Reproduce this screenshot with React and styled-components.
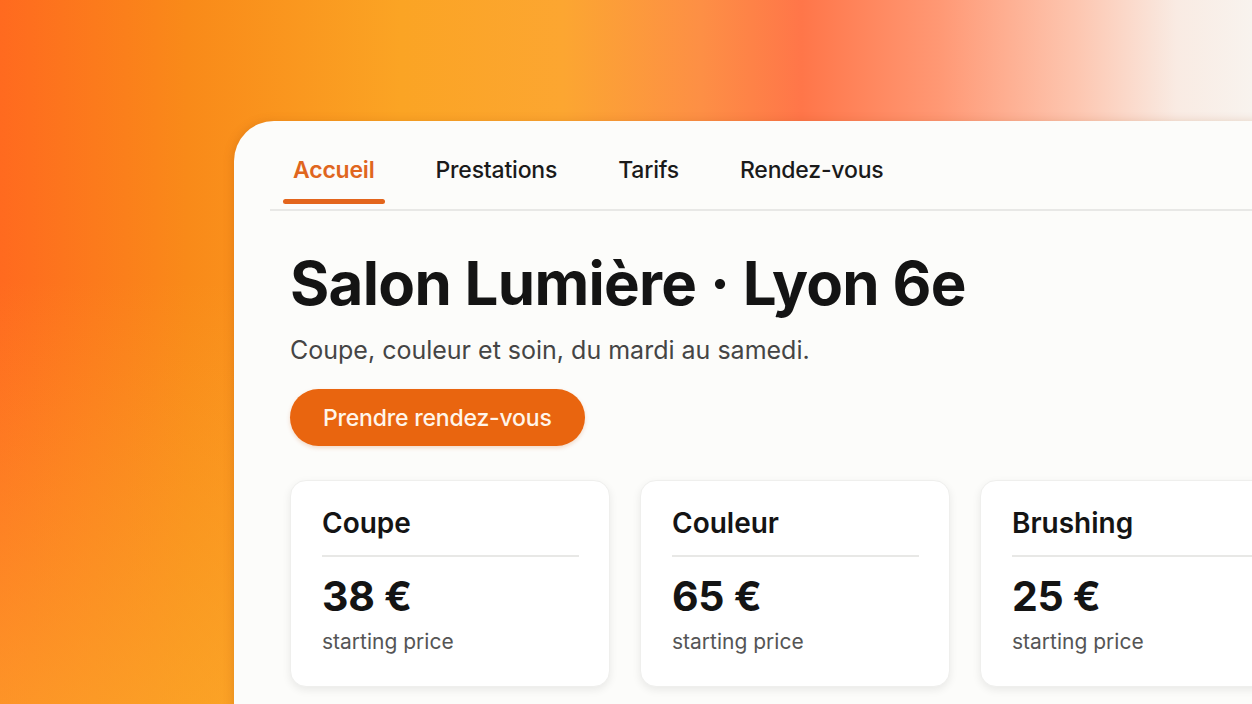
import React from "react";
import styled, { createGlobalStyle } from "styled-components";

const GlobalStyle = createGlobalStyle`
  html, body {
    margin: 0;
    padding: 0;
    height: 100%;
    overflow: hidden;
  }
  body {
    font-family: "Inter", "Noto Sans", sans-serif;
  }
`;

const tabs = ["Accueil", "Prestations", "Tarifs", "Rendez-vous"];

const services = [
  { name: "Coupe", price: "38 €" },
  { name: "Couleur", price: "65 €" },
  { name: "Brushing", price: "25 €" },
];

export default function App() {
  return (
    <Page>
      <GlobalStyle />
      <Panel>
        <Nav>
          {tabs.map((t, i) => (
            <Tab key={t} active={i === 0}>
              {t}
            </Tab>
          ))}
        </Nav>
        <Content>
          <Title>Salon Lumière · Lyon 6e</Title>
          <Subtitle>Coupe, couleur et soin, du mardi au samedi.</Subtitle>
          <Button>Prendre rendez-vous</Button>
          <Cards>
            {services.map((s) => (
              <Card key={s.name}>
                <CardTitle>{s.name}</CardTitle>
                <Price>{s.price}</Price>
                <PriceNote>starting price</PriceNote>
              </Card>
            ))}
          </Cards>
        </Content>
      </Panel>
    </Page>
  );
}

const Page = styled.div`
  width: 1252px;
  height: 704px;
  overflow: hidden;
  box-sizing: border-box;
  padding: 121px 0 0 234px;
  background:
    linear-gradient(180deg, rgba(255, 106, 30, 0) 40%, rgba(252, 175, 45, 0.6) 100%),
    linear-gradient(
      90deg,
      #ff6a1f 0%,
      #f98a19 15%,
      #fba424 32%,
      #fca631 45%,
      #fd8f45 56%,
      #ff7649 64%,
      #ff9874 75%,
      #fdc6b0 86%,
      #f9ebe3 94%,
      #f8f3ee 100%
    );
`;

const Panel = styled.div`
  width: 1060px;
  height: 640px;
  background: #fcfcfa;
  border-radius: 40px 0 0 0;
  box-shadow: -2px 0 10px rgba(150, 60, 0, 0.18);
`;

const Nav = styled.nav`
  display: flex;
  gap: 41px;
  margin-left: 36px;
  padding: 32px 0 0 13px;
  border-bottom: 2px solid #e8e8e6;
`;

const Tab = styled.div`
  position: relative;
  padding: 0 10px 22px;
  font-size: 23px;
  line-height: 34px;
  letter-spacing: -0.2px;
  color: ${(p) => (p.active ? "#e0661e" : "#1a1a1a")};
  font-weight: ${(p) => (p.active ? 600 : 500)};

  &::after {
    content: "";
    display: ${(p) => (p.active ? "block" : "none")};
    position: absolute;
    left: 0;
    right: 0;
    bottom: 5px;
    height: 5px;
    border-radius: 3px;
    background: #e3651c;
  }
`;

const Content = styled.div`
  padding: 34px 0 0 56px;
`;

const Title = styled.h1`
  margin: 0;
  font-size: 60px;
  line-height: 76px;
  font-weight: 700;
  letter-spacing: -0.7px;
  color: #141414;
`;

const Subtitle = styled.p`
  margin: 12px 0 0;
  font-size: 25px;
  line-height: 34px;
  color: #454545;
`;

const Button = styled.button`
  display: block;
  margin-top: 22px;
  height: 57px;
  padding: 0 33px;
  border: none;
  border-radius: 29px;
  background: #e9650f;
  color: #fff5ea;
  font-family: inherit;
  font-size: 23px;
  font-weight: 500;
  letter-spacing: -0.2px;
  box-shadow: 0 2px 4px rgba(200, 80, 0, 0.2);
`;

const Cards = styled.div`
  display: grid;
  grid-template-columns: 320px 310px 320px;
  gap: 30px;
  margin-top: 34px;
`;

const Card = styled.div`
  box-sizing: border-box;
  height: 207px;
  padding: 24px 30px 0 31px;
  background: #fff;
  border-radius: 16px;
  border: 1px solid #efefed;
  box-shadow: 0 3px 8px rgba(0, 0, 0, 0.08);
`;

const CardTitle = styled.div`
  font-size: 28px;
  line-height: 36px;
  font-weight: 600;
  color: #141414;
  padding-bottom: 14px;
  border-bottom: 2px solid #e8e8e6;
`;

const Price = styled.div`
  margin-top: 14px;
  font-size: 41px;
  line-height: 50px;
  font-weight: 700;
  color: #141414;
  letter-spacing: -0.3px;
`;

const PriceNote = styled.div`
  margin-top: 7px;
  font-size: 21px;
  line-height: 28px;
  color: #555;
`;
